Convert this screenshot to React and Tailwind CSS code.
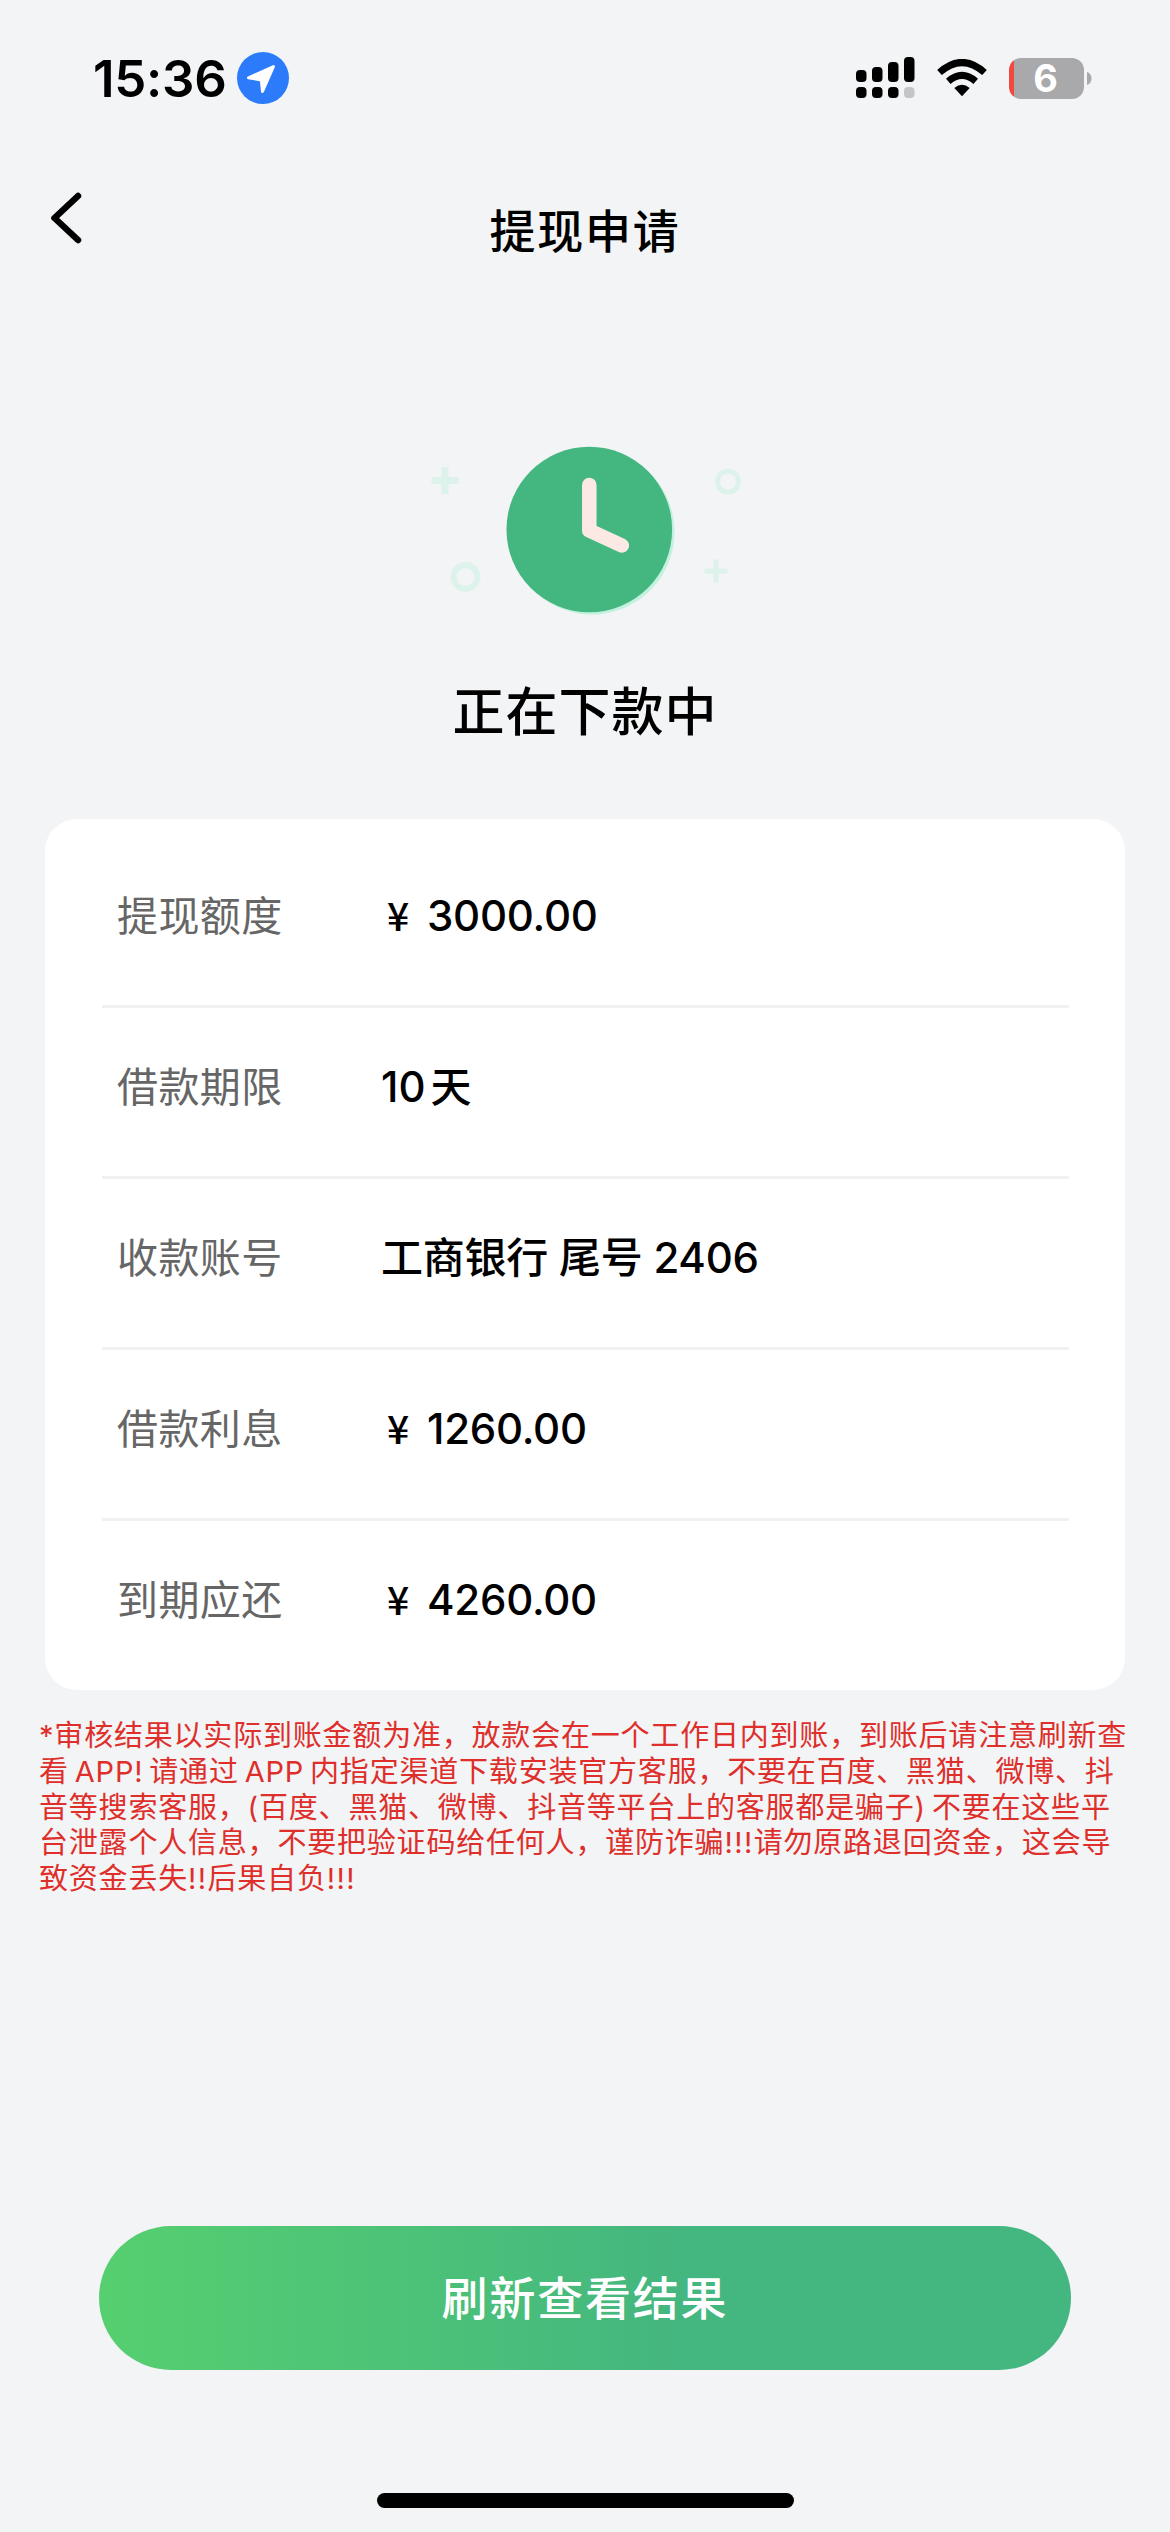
const rows = [
  { label: '提现额度', yen: true, value: '3000.00' },
  { label: '借款期限', days: '10' },
  { label: '收款账号', value: '工商银行 尾号 2406' },
  { label: '借款利息', yen: true, value: '1260.00' },
  { label: '到期应还', yen: true, value: '4260.00' },
];

const notice = [
  '*审核结果以实际到账金额为准，放款会在一个工作日内到账，到账后请注意刷新查',
  '看 APP! 请通过 APP 内指定渠道下载安装官方客服，不要在百度、黑猫、微博、抖',
  '音等搜索客服，(百度、黑猫、微博、抖音等平台上的客服都是骗子) 不要在这些平',
  '台泄露个人信息，不要把验证码给任何人，谨防诈骗!!!请勿原路退回资金，这会导',
  '致资金丢失!!后果自负!!!',
];

function StatusBar() {
  return (
    <div className="flex h-[156px] items-center pl-[93px] pr-[78px]">
      <span className="w-[144px] text-[51px] font-semibold leading-none tracking-[-0.3px] whitespace-nowrap">15:36</span>
      <svg className="size-[52px]" viewBox="0 0 52 52">
        <circle cx="26" cy="26" r="26" fill="#2b7bfb" />
        <path d="M36.5 14.5 L11.5 25.8 L24.3 28 L25.5 39.5 Z" fill="#fff" stroke="#fff" strokeWidth="3" strokeLinejoin="round" />
      </svg>
      <svg className="ml-auto h-[42px] w-[59px]" viewBox="0 0 59 42">
        <rect x="0" y="13" width="10.5" height="12" rx="4" />
        <rect x="16" y="10" width="10.5" height="15" rx="4" />
        <rect x="32" y="5" width="10.5" height="20" rx="4" />
        <rect x="48" y="0" width="10.5" height="25" rx="4" />
        <rect x="0" y="30" width="10.5" height="11" rx="4" />
        <rect x="16" y="30" width="10.5" height="11" rx="4" />
        <rect x="32" y="30" width="10.5" height="11" rx="4" />
        <rect x="48" y="30" width="10.5" height="11" rx="4" fill="#c4c5c6" />
      </svg>
      <svg className="ml-[21px] h-[38px] w-[52px]" viewBox="0 0 52 38">
        <path d="M3.5 13.5 Q26 -6.5 48.5 13.5" fill="none" stroke="#000" strokeWidth="7" />
        <path d="M12.3 22.3 Q26 10.5 39.7 22.3" fill="none" stroke="#000" strokeWidth="7" />
        <path d="M18.3 29 Q26 22.5 33.7 29 L26 37.2 Z" />
      </svg>
      <div className="ml-[21px] flex h-[41px] w-[75px] items-center justify-center rounded-[12px] bg-[linear-gradient(90deg,#f2493f_5px,#a9a9ab_5px)] text-[38px] font-bold leading-[41px] text-white">
        <span className="-ml-[2px]">6</span>
      </div>
      <svg className="ml-[3px] h-[13px] w-[5px]" viewBox="0 0 5 13">
        <path d="M0 0 C6 2 6 11 0 13 Z" fill="#a9a9ab" />
      </svg>
    </div>
  );
}

function ClockArt() {
  return (
    <svg className="h-[176px] w-[320px]" viewBox="425 442 320 176">
      <g fill="none" stroke="#ddf2ea">
        <path d="M445 467v27M431.500 480.500h27" strokeWidth="7" />
        <path d="M716 559.500v23M704.500 571h23" strokeWidth="5" />
        <circle cx="465.500" cy="577" r="12" strokeWidth="6" />
        <circle cx="728" cy="481.500" r="10.500" strokeWidth="5" />
      </g>
      <circle cx="592" cy="532" r="82.500" fill="#c2f1de" />
      <circle cx="589.300" cy="529.500" r="82.800" fill="#44b67f" />
      <path d="M589.300 485v45.500l32.500 15" fill="none" stroke="#fce9e6" strokeWidth="14.500" strokeLinecap="round" strokeLinejoin="round" />
    </svg>
  );
}

export default function App() {
  return (
    <div className="flex h-[2532px] w-[1170px] flex-col overflow-hidden bg-[#f2f4f6] text-black font-[Inter,'Noto_Sans_CJK_SC',sans-serif]">
      <StatusBar />
      <header className="grid h-[150px] grid-cols-[120px_1fr_120px] items-center">
        <svg className="mb-[26px] ml-[48px] h-[56px] w-[36px]" viewBox="0 0 36 56">
          <path d="M30 6 L6.500 28 L30 50" fill="none" stroke="#000" strokeWidth="6.500" strokeLinecap="round" strokeLinejoin="round" />
        </svg>
        <h1 className="text-center text-[46px] font-medium leading-none tracking-[1.8px]">提现申请</h1>
      </header>

      <section className="mt-[136px] flex flex-col items-center">
        <ClockArt />
        <h2 className="mt-[69px] text-[52px] font-medium leading-[52px] tracking-[1px]">正在下款中</h2>
      </section>

      <main className="mx-[45px] mt-[80px] h-[871px] rounded-[32px] bg-white pl-[57px] pr-[56px] pt-[18px]">
        {rows.map((r) => (
          <div key={r.label} className="flex h-[171px] items-center border-b-[3px] border-[#f1f1f2] pb-[10px] pl-[15px] last:border-b-0 last:pb-[13px]">
            <span className="w-[264px] text-[41px] leading-none tracking-[0.4px] text-[#666]">{r.label}</span>
            <span className="flex items-center whitespace-pre text-[42px] font-medium leading-none">
              {r.yen && <span className="mb-[4px] ml-[6px] w-[40px] font-['Noto_Sans_CJK_SC'] text-[39px]">¥</span>}
              {r.days && <span>{r.days}</span>}
              {r.days && <span className="ml-[5px] text-[41px]">天</span>}
              {r.value && <span className="tracking-[-0.25px]">{r.value}</span>}
            </span>
          </div>
        ))}
      </main>

      <div className="ml-[39px] mt-[28px] text-[29px] leading-[35.800px] tracking-[0.8px] text-[#de2f2b] [word-spacing:-3px]">
        {notice.map((line) => (
          <p key={line} className="whitespace-nowrap">
            {line.split(/(!{2,})/).map((part, i) =>
              part.startsWith('!!') ? <span key={i} className="tracking-[1.4px]">{part}</span> : part
            )}
          </p>
        ))}
      </div>

      <button className="mx-[99px] mt-auto flex h-[144px] shrink-0 items-center justify-center rounded-full bg-[linear-gradient(90deg,#56cf70_0%,#44b67f_60%)] text-[46px] font-medium tracking-[1.800px] text-white">
        刷新查看结果
      </button>
      <div className="mb-[24px] mt-[123px] h-[15px] w-[417px] shrink-0 self-center rounded-full bg-black" />
    </div>
  );
}
